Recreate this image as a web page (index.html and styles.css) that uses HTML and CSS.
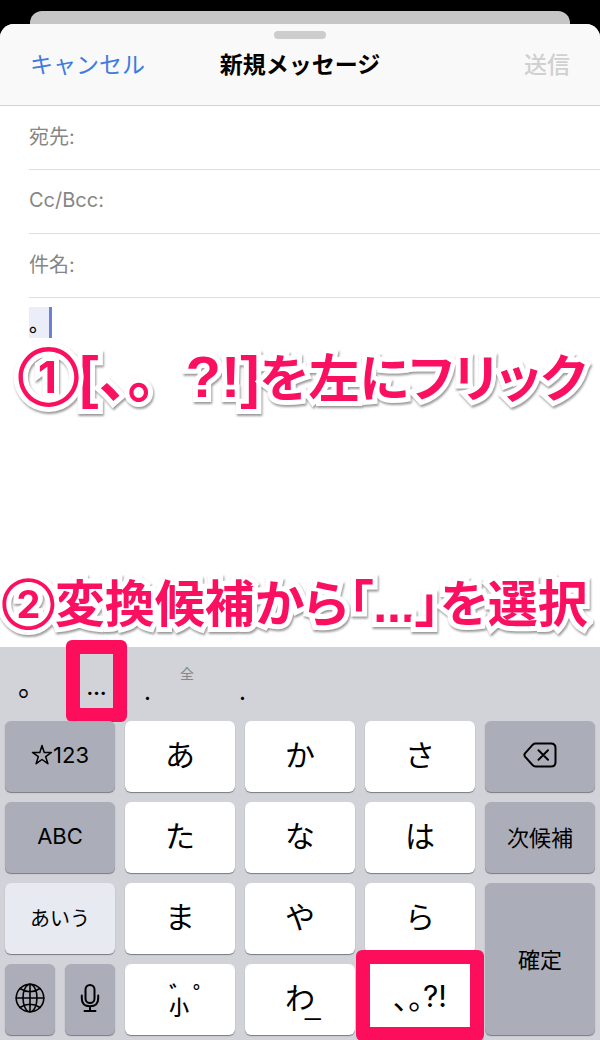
FILE: index.html
```html
<!DOCTYPE html>
<html lang="ja">
<head>
    <meta charset="UTF-8">
    <meta name="viewport" content="width=device-width, initial-scale=1.0">
    <title>新規メッセージ</title>
    <link rel="stylesheet" href="styles.css">
</head>
<body>
    <div class="back-sheet"></div>
    <main class="sheet">
        <header class="nav">
            <div class="grabber"></div>
            <div class="nav-row">
                <button type="button" class="cancel">キャンセル</button>
                <h1>新規メッセージ</h1>
                <button type="button" class="send" disabled>送信</button>
            </div>
        </header>
        <form class="fields">
            <div class="field">
                <label for="to">宛先:</label>
                <input type="text" id="to" name="to">
            </div>
            <div class="field">
                <label for="cc">Cc/Bcc:</label>
                <input type="text" id="cc" name="cc">
            </div>
            <div class="field">
                <label for="subject">件名:</label>
                <input type="text" id="subject" name="subject">
            </div>
        </form>
        <section class="compose">
            <div class="message" role="textbox" aria-label="本文"><span class="marked">。</span></div>
            <p class="caption step-one"><span class="num">①</span><span class="latin">[</span><span class="wide">、。</span><span class="latin">?!]</span><span class="tight">を左にフリック</span></p>
            <p class="caption step-two"><span class="num">②</span>変換候補<span class="tight">から「</span><span class="latin">...</span><span class="tight">」を</span>選択</p>
        </section>
    </main>
    <section class="keyboard">
        <div class="candidates">
            <button type="button" class="maru">。</button>
            <button type="button" class="ellipsis framed">…</button>
            <button type="button" class="dot">.<small>全</small></button>
            <button type="button" class="dot">.</button>
        </div>
        <div class="keys">
            <button type="button" class="key dark">
                <svg class="star" viewBox="0 0 22 22"><path d="M11 1.500 13.200 8.400H20.500L14.700 12.700 16.900 19.700 11 15.500 5.100 19.700 7.300 12.700 1.500 8.400H8.800Z"/></svg>123
            </button>
            <button type="button" class="key">あ</button>
            <button type="button" class="key">か</button>
            <button type="button" class="key">さ</button>
            <button type="button" class="key dark" aria-label="削除">
                <svg class="delete" viewBox="0 0 34 26"><path d="M12.5 1.5H28Q32.5 1.5 32.5 6V20Q32.5 24.500 28 24.500H12.500Q11 24.500 9.800 23.300L2 14.600Q.8 13 2 11.400L9.800 2.700Q11 1.500 12.500 1.500ZM15.500 8.200 25 17.800M25 8.200 15.500 17.800"/></svg>
            </button>

            <button type="button" class="key dark">ABC</button>
            <button type="button" class="key">た</button>
            <button type="button" class="key">な</button>
            <button type="button" class="key">は</button>
            <button type="button" class="key dark">次候補</button>

            <button type="button" class="key dark active">あいう</button>
            <button type="button" class="key">ま</button>
            <button type="button" class="key">や</button>
            <button type="button" class="key">ら</button>
            <button type="button" class="key dark tall">確定</button>

            <div class="pair">
                <button type="button" class="key dark" aria-label="キーボード切替">
                    <svg class="globe" viewBox="0 0 30 30"><circle cx="15" cy="15" r="13.800"/><ellipse cx="15" cy="15" rx="7" ry="13.800"/><path d="M15 1.200V28.800M1.200 15H28.800M5 5.500Q15 12 25 5.500M5 24.500Q15 18 25 24.500"/></svg>
                </button>
                <button type="button" class="key dark" aria-label="音声入力">
                    <svg class="mic" viewBox="0 0 20 30"><rect x="5.500" y="2" width="9" height="18" rx="4.500"/><path d="M1.800 12.500V15.500Q1.800 23.300 10 23.300T18.200 15.500V12.500M10 23.300V28M4.500 28H15.500"/></svg>
                </button>
            </div>
            <button type="button" class="key"><span class="marks">゛゜<br>小</span></button>
            <button type="button" class="key">わ<span class="low-line">_</span></button>
            <button type="button" class="key framed"><span class="tight">、。</span>?!</button>
        </div>
    </section>
</body>
</html>
```

FILE: styles.css
```css
* {
    box-sizing: border-box;
}
body {
    margin: 0;
    min-height: 100vh;
    display: flex;
    flex-direction: column;
    background-color: #000;
    font-family: Inter, "Noto Sans CJK JP", sans-serif;
    color: #000;
}
button {
    font: inherit;
    color: inherit;
    background: none;
    border: none;
    padding: 0;
}
.back-sheet {
    height: 13px;
    margin: 11px 30px 0;
    background-color: #c6c6c6;
    border-radius: 12px 12px 0 0;
}
.sheet {
    flex: 1;
    display: flex;
    flex-direction: column;
    background-color: #fff;
    border-radius: 14px 14px 0 0;
}
.nav {
    height: 82px;
    padding: 7px 30px 0;
    background-color: #f9f9f9;
    border-bottom: 1px solid #d2d2d2;
    border-radius: 14px 14px 0 0;
}
.grabber {
    width: 52px;
    height: 8px;
    margin: 0 auto;
    background-color: #cdcdcd;
    border-radius: 4px;
}
.nav-row {
    display: grid;
    grid-template-columns: 1fr auto 1fr;
    align-items: center;
    margin-top: 9px;
    font-size: 23px;
    line-height: 34px;
}
.nav-row h1 {
    margin: 0;
    font-size: 23px;
    font-weight: 600;
}
.cancel {
    justify-self: start;
    color: #3f7be0;
}
.send {
    justify-self: end;
    color: #d0d0d0;
    font-weight: 500;
}
.fields {
    padding-left: 29px;
}
.field {
    display: flex;
    align-items: center;
    height: 64px;
    padding-bottom: 4px;
    border-bottom: 1px solid #dedede;
    font-size: 20px;
}
.field label {
    color: #868686;
}
.field input {
    flex: 1;
    min-width: 0;
    border: none;
    outline: none;
    background: none;
    font: inherit;
}
.compose {
    flex: 1;
    display: flex;
    flex-direction: column;
    padding: 9px 0;
}
.message {
    padding-left: 29px;
    height: 32px;
    font-size: 20px;
}
.marked {
    display: inline-block;
    height: 31px;
    line-height: 36px;
    background-color: #ebedf9;
    border-right: 3px solid #6b80dc;
    font-weight: 500;
}
.caption {
    margin: 0;
    white-space: nowrap;
    font-family: "Noto Sans CJK JP", sans-serif;
    font-weight: 700;
    color: #fb0f60;
    -webkit-text-stroke: 10px #fff;
    paint-order: stroke fill;
    filter: drop-shadow(1px 2px 1px #999);
}
.caption .latin {
    font-family: "Liberation Sans", sans-serif;
}
.caption .num {
    position: relative;
    z-index: 1;
    font-family: Inter, sans-serif;
    line-height: 1;
    vertical-align: 4px;
}
.tight {
    font-feature-settings: "palt";
}
.step-one {
    padding-left: 18px;
    font-size: 51px;
    line-height: 66px;
}
.step-one .num {
    font-size: 44px;
}
.step-one .latin,
.step-one .wide {
    font-size: 58px;
}
.step-two {
    margin-top: auto;
    padding-left: 2px;
    font-size: 50px;
    line-height: 66px;
}
.step-two .num {
    font-size: 38px;
}
.keyboard {
    background-color: #d1d3d9;
}
.candidates {
    display: flex;
    height: 74px;
    font-size: 24px;
}
.candidates button {
    position: relative;
    padding-top: 14px;
}
.candidates .maru {
    width: 66px;
    padding: 0 0 0 18px;
    text-align: left;
    font-size: 28px;
}
.candidates .ellipsis {
    width: 61px;
    padding-top: 8px;
    font-size: 20px;
    font-weight: 700;
}
.candidates .dot {
    width: 95px;
    padding-left: 17px;
    text-align: left;
}
.candidates small {
    position: absolute;
    left: 53px;
    top: 16px;
    font-size: 14px;
    color: #85878c;
}
/* pink frame round the key to press */
.framed {
    position: relative;
}
.framed::after {
    content: "";
    position: absolute;
    inset: -7px 0 -1px;
    border: 14px solid #fd0e5c;
    border-radius: 6px;
}
.keys {
    display: grid;
    grid-template-columns: repeat(5, 1fr);
    grid-auto-rows: 71px;
    gap: 10px;
    padding: 0 5px 5px;
}
.key {
    position: relative;
    display: flex;
    align-items: center;
    justify-content: center;
    padding-bottom: 8px;
    background-color: #fff;
    border-radius: 6px;
    box-shadow: 0 1px 1px #777a80;
    font-size: 30px;
}
.key.dark {
    padding-bottom: 3px;
    background-color: #abaeb9;
    font-size: 22px;
}
.key.active {
    background-color: #e7eaf1;
    font-size: 20px;
}
.key.tall {
    grid-row: span 2;
}
.key.framed::after {
    inset: -14px -9px -6px;
}
.pair {
    display: grid;
    grid-template-columns: 1fr 1fr;
    gap: 10px;
}
.key svg {
    fill: none;
    stroke: #000;
    stroke-width: 2;
    stroke-linejoin: round;
    stroke-linecap: round;
}
.key .star {
    width: 22px;
    height: 22px;
    stroke-width: 1.5;
}
.delete {
    width: 34px;
    height: 26px;
}
.key .globe {
    width: 30px;
    height: 30px;
    stroke-width: 1.6;
}
.mic {
    flex: none;
    width: 20px;
    height: 30px;
}
.marks {
    width: 22px;
    padding-top: 12px;
    font-size: 20px;
    font-weight: 500;
    line-height: 12px;
    text-align: left;
    white-space: nowrap;
}
.marks::first-line {
    font-size: 24px;
}
.low-line {
    position: absolute;
    left: 60px;
    bottom: 16px;
    font-family: "Liberation Sans", sans-serif;
    font-size: 28px;
    line-height: 28px;
}
```
